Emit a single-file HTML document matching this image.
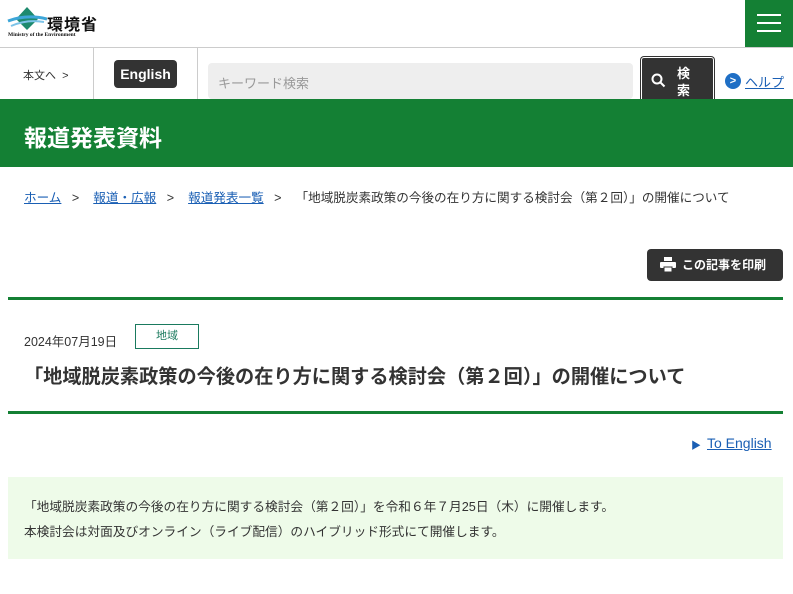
<!DOCTYPE html>
<html><head><meta charset="utf-8"><style>
*{box-sizing:border-box;margin:0;padding:0}
body{width:793px;height:594px;overflow:hidden;background:#fff;font-family:"Liberation Sans","Noto Sans CJK JP",sans-serif;color:#333;position:relative}
.a{position:absolute}
a{color:#1a5fb4;text-decoration:underline}
</style></head><body>
<div class="a" style="left:0;top:0;width:793px;height:48px;border-bottom:1px solid #ccc"></div>
<svg class="a" style="left:7px;top:6px" width="40" height="25" viewBox="0 0 40 25">
<polygon points="20,1 31,13 20,24 9,13" fill="#1d8a6e"/>
<path d="M1,15 Q20,8 40,13" stroke="#3da6d8" stroke-width="3" fill="none"/>
<path d="M4,20 Q20,13 37,16" stroke="#7cc3e8" stroke-width="2" fill="none"/>
</svg>
<div class="a" style="left:47px;top:11px;font-size:16px;font-weight:bold;color:#111;letter-spacing:1px">環境省</div>
<div class="a" style="left:8px;top:32px;font-size:5.5px;font-family:'Liberation Serif',serif;font-weight:bold;color:#111;white-space:nowrap">Ministry of the Environment</div>
<div class="a" style="left:745px;top:0;width:48px;height:47px;background:#148034"></div>
<div class="a" style="left:757px;top:14px;width:24px;height:2px;background:#fff"></div>
<div class="a" style="left:757px;top:22px;width:24px;height:2px;background:#fff"></div>
<div class="a" style="left:757px;top:30px;width:24px;height:2px;background:#fff"></div>

<div class="a" style="left:23px;top:67px;font-size:11px;color:#333">本文へ&nbsp;&nbsp;&gt;</div>
<div class="a" style="left:93px;top:48px;width:1px;height:52px;background:#ccc"></div>
<div class="a" style="left:197px;top:48px;width:1px;height:52px;background:#ccc"></div>
<div class="a" style="left:114px;top:60px;width:63px;height:28px;background:#333;border-radius:4px;color:#fff;font-size:14px;font-weight:bold;text-align:center;line-height:28px">English</div>
<div class="a" style="left:208px;top:63px;width:425px;height:36px;background:#eee;border-radius:4px;font-size:13px;color:#999;padding:10px 10px">キーワード検索</div>
<div class="a" style="left:641px;top:57px;width:73px;height:47px;background:#333;border-radius:3px;border:1px solid #fff;box-shadow:0 0 0 1px #333"></div>
<svg class="a" style="left:651px;top:73px" width="15" height="15" viewBox="0 0 15 15"><circle cx="6" cy="6" r="4.5" stroke="#fff" stroke-width="2" fill="none"/><path d="M9.5 9.5L13.5 13.5" stroke="#fff" stroke-width="2"/></svg>
<div class="a" style="left:677px;top:65px;font-size:13px;font-weight:bold;color:#fff;line-height:17px;width:14px">検索</div>
<div class="a" style="left:725px;top:73px;width:16px;height:16px;border-radius:50%;background:#1f6fc5;color:#fff;font-size:11px;text-align:center;line-height:16px;font-weight:bold">&gt;</div>
<a class="a" style="left:745px;top:72px;font-size:13px" >ヘルプ</a>

<div class="a" style="left:0;top:99px;width:793px;height:68px;background:#148034"></div>
<div class="a" style="left:24px;top:119px;font-size:23px;font-weight:bold;color:#fff">報道発表資料</div>

<div class="a" style="left:24px;top:187px;font-size:12.6px;white-space:nowrap"><a>ホーム</a>&nbsp;&nbsp;&nbsp;&gt;&nbsp;&nbsp;&nbsp;&nbsp;<a>報道・広報</a>&nbsp;&nbsp;&nbsp;&gt;&nbsp;&nbsp;&nbsp;&nbsp;<a>報道発表一覧</a>&nbsp;&nbsp;&nbsp;&gt;&nbsp;&nbsp;&nbsp;&nbsp;「地域脱炭素政策の今後の在り方に関する検討会（第２回）」の開催について</div>

<div class="a" style="left:647px;top:249px;width:136px;height:32px;background:#333;border-radius:4px;color:#fff;font-size:12px;font-weight:bold;line-height:32px;padding-left:35px">この記事を印刷</div>
<svg class="a" style="left:660px;top:257px" width="16" height="15" viewBox="0 0 16 15"><rect x="4" y="0" width="8" height="4" fill="#fff"/><rect x="0" y="5" width="16" height="6" rx="1" fill="#fff"/><rect x="4" y="10" width="8" height="5" fill="#fff" stroke="#333" stroke-width="1"/></svg>

<div class="a" style="left:8px;top:297px;width:775px;height:3px;background:#148034"></div>
<div class="a" style="left:24px;top:331px;font-size:12.5px">2024年07月19日</div>
<div class="a" style="left:135px;top:324px;width:64px;height:25px;border:1px solid #1a7a5e;color:#1a7a5e;font-size:11px;text-align:center;line-height:23px">地域</div>
<div class="a" style="left:24px;top:361px;font-size:19.2px;font-weight:bold;white-space:nowrap">「地域脱炭素政策の今後の在り方に関する検討会（第２回）」の開催について</div>
<div class="a" style="left:8px;top:411px;width:775px;height:3px;background:#148034"></div>

<div class="a" style="left:691px;top:437px;font-size:10px;color:#1a5fb4">▶</div>
<a class="a" style="left:707px;top:435px;font-size:14px">To English</a>

<div class="a" style="left:8px;top:477px;width:775px;height:82px;background:#eefbe9"></div>
<div class="a" style="left:24px;top:495px;font-size:12.7px;line-height:25px;color:#333;white-space:nowrap">「地域脱炭素政策の今後の在り方に関する検討会（第２回）」を令和６年７月25日（木）に開催します。<br>本検討会は対面及びオンライン（ライブ配信）のハイブリッド形式にて開催します。</div>
</body></html>
